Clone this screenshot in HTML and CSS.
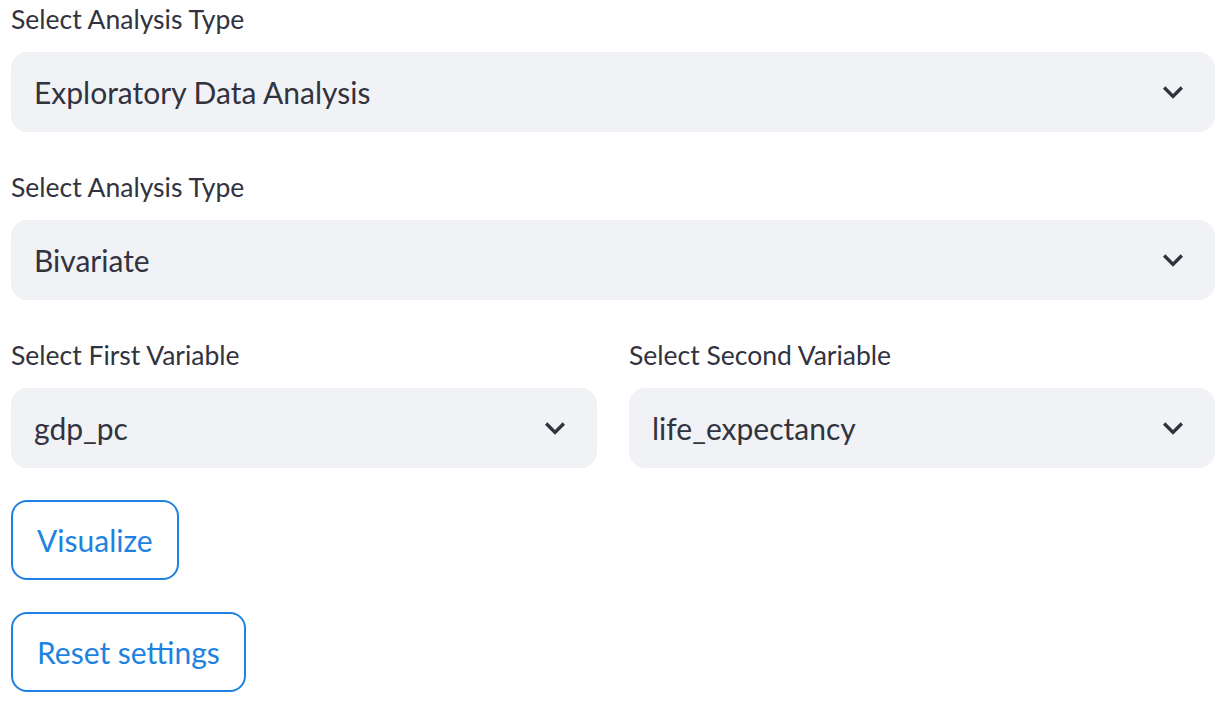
FILE: index.html
```html
<!DOCTYPE html>
<html lang="en">
<head>
    <meta charset="UTF-8">
    <meta name="viewport" content="width=device-width, initial-scale=1.0">
    <title>Analysis</title>
    <link rel="stylesheet" href="styles.css">
</head>
<body>
    <div class="container">
        <div class="field">
            <label class="field-label">Select Analysis Type</label>
            <div class="select">
                <span class="select-value">Exploratory Data Analysis</span>
                <svg class="chevron" viewBox="0 0 24 24"><path d="M16.59 8.59L12 13.17 7.41 8.59 6 10l6 6 6-6z"/></svg>
            </div>
        </div>

        <div class="field">
            <label class="field-label">Select Analysis Type</label>
            <div class="select">
                <span class="select-value">Bivariate</span>
                <svg class="chevron" viewBox="0 0 24 24"><path d="M16.59 8.59L12 13.17 7.41 8.59 6 10l6 6 6-6z"/></svg>
            </div>
        </div>

        <div class="columns">
            <div class="field">
                <label class="field-label">Select First Variable</label>
                <div class="select">
                    <span class="select-value">gdp_pc</span>
                    <svg class="chevron" viewBox="0 0 24 24"><path d="M16.59 8.59L12 13.17 7.41 8.59 6 10l6 6 6-6z"/></svg>
                </div>
            </div>
            <div class="field">
                <label class="field-label">Select Second Variable</label>
                <div class="select">
                    <span class="select-value">life_expectancy</span>
                    <svg class="chevron" viewBox="0 0 24 24"><path d="M16.59 8.59L12 13.17 7.41 8.59 6 10l6 6 6-6z"/></svg>
                </div>
            </div>
        </div>

        <div class="actions">
            <button class="btn">Visualize</button>
            <button class="btn">Reset settings</button>
        </div>
    </div>
</body>
</html>
```

FILE: styles.css
```css
body {
    margin: 0;
    padding: 0;
    background: #ffffff;
    font-family: Lato, "Noto Sans", sans-serif;
    color: #31333f;
}

.container {
    display: flex;
    flex-direction: column;
    gap: 32px;
    width: 1204px;
    margin: -4px 0 0 11px;
}

.field {
    display: flex;
    flex-direction: column;
}

.field-label {
    height: 48px;
    margin-bottom: 8px;
    font-size: 26.5px;
    line-height: 46px;
}

.select {
    display: flex;
    align-items: center;
    justify-content: space-between;
    height: 80px;
    padding: 0 22px 0 23px;
    box-sizing: border-box;
    border-radius: 16px;
    background-color: #f0f2f6;
}

.select-value {
    font-size: 30px;
}

.chevron {
    width: 40px;
    height: 40px;
    fill: #31333f;
}

.columns {
    display: grid;
    grid-template-columns: 1fr 1fr;
    gap: 32px;
}

.actions {
    display: flex;
    flex-direction: column;
    align-items: flex-start;
    gap: 32px;
}

.btn {
    height: 80px;
    padding: 0 24px;
    border: 2px solid #1c83e1;
    border-radius: 16px;
    background: #ffffff;
    color: #1c83e1;
    font-family: Lato, "Noto Sans", sans-serif;
    font-size: 30px;
}
```
